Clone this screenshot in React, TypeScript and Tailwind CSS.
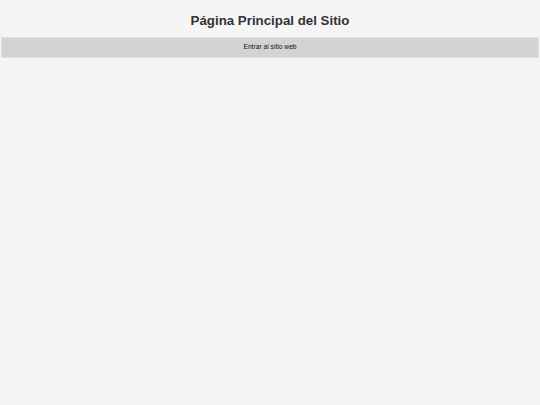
export default function App() {
  return (
    <div className="min-h-[405px] bg-[#f5f5f5] font-['Liberation_Sans',Arial,sans-serif]">
      <h1 className="pt-[12px] pb-[8px] text-center text-[13.3px] font-bold leading-[17px] text-[#333]">
        Página Principal del Sitio
      </h1>
      <div className="mx-px flex h-[21px] items-center justify-center border border-[#e0e0e0] bg-[#d3d3d3] text-[6.7px] text-[#111]">
        Entrar al sitio web
      </div>
    </div>
  );
}
